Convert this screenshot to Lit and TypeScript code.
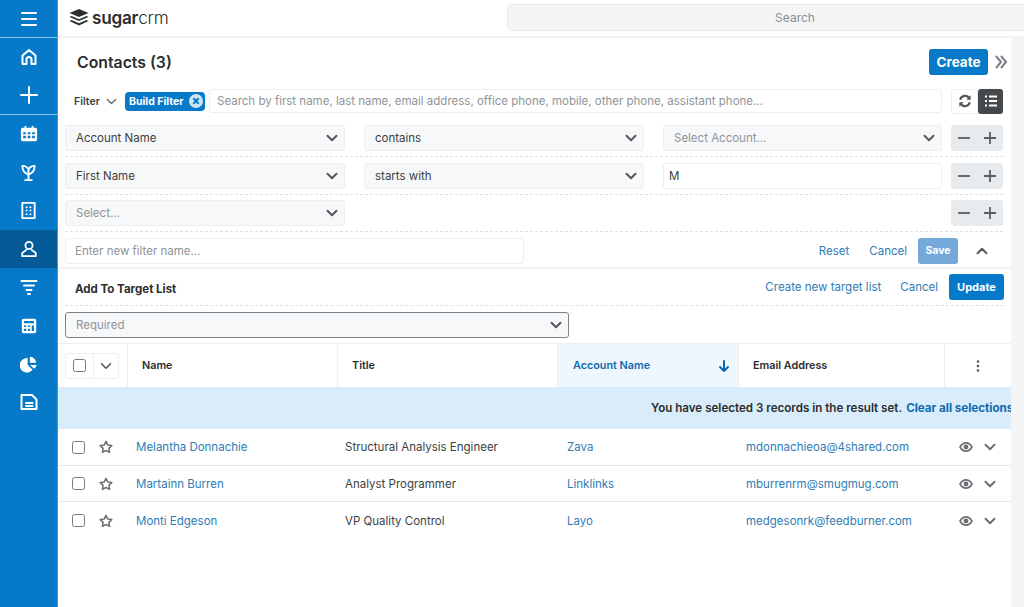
import { LitElement, html, css, svg } from "lit";
import { customElement } from "lit/decorators.js";

const i = (body: unknown, size = 20) =>
  html`<svg width=${size} height=${size} viewBox="0 0 20 20" fill="none" stroke="currentColor" stroke-width="2" stroke-linecap="round" stroke-linejoin="round">${body}</svg>`;

const chev = (size = 14, sw = 2) =>
  html`<svg width=${size} height=${size} viewBox="0 0 14 14" fill="none" stroke="currentColor" stroke-width=${sw} stroke-linecap="round" stroke-linejoin="round"><path d="M2.500 4.800 7 9.200l4.500-4.400"/></svg>`;

const navIcons: Record<string, [unknown, number]> = {
  home: [svg`<path d="M3.500 17V8.500L10 3l6.500 5.500V17h-4v-4.500a2.500 2.500 0 0 0-5 0V17z"/>`, 20],
  plus: [svg`<path d="M10 2v16M2 10h16"/>`, 20],
  cal: [svg`<path fill="currentColor" stroke="none" d="M5 1h2v2h6V1h2v2h2a2 2 0 0 1 2 2v11a2 2 0 0 1-2 2H3a2 2 0 0 1-2-2V5a2 2 0 0 1 2-2h2zM3.500 8v2.200h3V8zm5 0v2.200h3V8zm5 0v2.200h3V8zm-10 4v2.600h3V12zm5 0v2.600h3V12zm5 0v2.600h3V12z"/>`, 18],
  sprout: [svg`<path d="M10 18v-6M6.500 18h7M10 12C6 11 3.500 8 3.500 3c3.500 0 6.500 2 6.500 5v4zM10 8c0-2.500 2.500-5 6.500-5 0 5-2.500 8-6.500 9"/>`, 19],
  building: [svg`<path d="M3.500 2h13v16h-13z"/><path stroke-width="2.200" d="M8 6.500h0M12 6.500h0M8 10h0M12 10h0M8 14h0M12 14h0"/>`, 19],
  person: [svg`<circle cx="10" cy="6" r="4"/><path d="M7 11 2.500 14.500V18h15v-3.500L13 11"/>`, 18],
  funnel: [svg`<path d="M2.500 4h15M5 8.500h10M7.500 13h5M9 17h2"/>`, 20],
  calc: [svg`<path fill="currentColor" stroke="none" d="M4 2h12a2 2 0 0 1 2 2v12a2 2 0 0 1-2 2H4a2 2 0 0 1-2-2V4a2 2 0 0 1 2-2zm.500 2.500V7h11V4.500zm0 5V11h2.500V9.500zm4.300 0V11h2.400V9.500zm4.200 0V15.500h2.500V9.500zm-8.500 3.500v2.500h2.500V13zm4.300 0v2.500h2.400V13z"/>`, 18],
  pie: [svg`<path fill="currentColor" stroke="none" d="M8.500 3.500V11l5.500 5.300A8 8 0 1 1 8.500 3.500zM11 2a8 8 0 0 1 7 6.500h-7zM11 11h7.500a8 8 0 0 1-2.600 4.300z"/>`, 18],
  doc: [svg`<path d="M2.500 3h10.500l4.500 4.500V17h-15z"/><path d="M7 11h6.500M7 14h6.500"/>`, 20],
};

const rows = [
  ["Melantha Donnachie", "Structural Analysis Engineer", "Zava", "mdonnachieoa@4shared.com"],
  ["Martainn Burren", "Analyst Programmer", "Linklinks", "mburrenrm@smugmug.com"],
  ["Monti Edgeson", "VP Quality Control", "Layo", "medgesonrk@feedburner.com"],
];

@customElement("app-root")
export class AppRoot extends LitElement {
  static styles = css`
    :host { display: flex; width: 1024px; height: 607px; overflow: hidden; background: #f3f5f7; font-family: Inter, "Liberation Sans", sans-serif; font-size: 11.500px; color: #2b2d2e; }
    * { box-sizing: border-box; }
    .side { width: 58px; flex: none; background: #0679c8; color: #fff; border-right: 1px solid #3d9ae0; display: flex; flex-direction: column; }
    .side .top { height: 38px; flex: none; border-bottom: 1px solid #8cc3ea; display: flex; align-items: center; justify-content: center; }
    .group { height: 77px; flex: none; border-bottom: 1px solid #8cc3ea; }
    .group.last { height: auto; border: 0; }
    .nav { height: 38.300px; display: flex; align-items: center; justify-content: center; }
    .nav.on { background: #055a98; }
    .content { flex: 1; min-width: 0; display: flex; flex-direction: column; }
    .bar { height: 38px; flex: none; background: #fff; border-bottom: 2px solid #f1f3f5; display: flex; align-items: center; padding-left: 11px; }
    .logo { display: flex; align-items: center; gap: 3px; width: 438px; flex: none; font-size: 17.200px; letter-spacing: -.25px; color: #2b2d2e; padding-bottom: 2px; }
    .logo b { font-weight: 600; }
    .logo span { font-weight: 300; }
    .search { width: 576px; flex: none; height: 27px; margin-top: -2px; background: #f3f5f6; border: 1px solid #e8ebed; border-radius: 6px; display: flex; align-items: center; justify-content: center; color: #8a8f94; font-size: 12px; }
    .main { width: 953px; flex: 1; background: #fff; overflow: hidden; }
    .head { height: 50px; display: flex; align-items: center; padding: 0 0 2px 19px; }
    .head h1 { font-size: 15.800px; font-weight: 600; margin: 0; flex: 1; color: #2b2d2e; }
    .btn { background: #0679c8; color: #fff; font-weight: 700; border-radius: 3px; display: flex; align-items: center; justify-content: center; flex: none; }
    .create { width: 59px; height: 26px; font-size: 13.500px; }
    .more { width: 23px; padding-right: 3px; color: #7b8086; display: flex; justify-content: flex-end; }
    .filter { display: flex; align-items: center; height: 26px; padding-left: 16px; margin-bottom: 11px; }
    .filter .lbl { font-size: 10.500px; font-weight: 600; color: #3c3f42; width: 31px; }
    .filter .c { width: 20px; color: #6c7075; display: flex; }
    .pill { width: 80px; height: 19px; background: #0679c8; color: #fff; font-size: 10.500px; font-weight: 700; border-radius: 4px; display: flex; align-items: center; justify-content: space-between; padding: 0 1px 0 4px; margin-right: 4px; }
    .pill svg { color: #cfe6f7; }
    .field { border: 1px solid #eceef0; border-radius: 3px; height: 26px; background: #f6f8f9; display: flex; align-items: center; justify-content: space-between; padding: 0 5px 0 10px; font-size: 11.500px; color: #3c3f42; min-width: 0; }
    .field svg { color: #54585c; }
    .field.ph { color: #8f9499; }
    .field.w { background: #fff; }
    .field.val { padding-left: 5px; justify-content: flex-start; }
    .qs { width: 733px; height: 24px; padding-left: 7px; font-size: 11.500px; white-space: nowrap; overflow: hidden; justify-content: flex-start; }
    .icons { display: flex; margin-left: 9px; }
    .ib { width: 27px; height: 25px; border: 1px solid #eceef0; border-radius: 3px 0 0 3px; display: flex; align-items: center; justify-content: center; color: #54585c; }
    .ib.dark { width: 25px; background: #46494c; color: #fff; border: 0; border-radius: 3px; }
    .frow { display: grid; grid-template-columns: 280px 280px 279px 42px; column-gap: 19px; margin: 0 8px 5.500px 7px; height: 32px; border-bottom: 1px dashed #dfe2e5; align-items: start; }
    .frow.end { margin-bottom: 0; }
    .pm { grid-column: 4; margin-left: -10px; width: 52px; height: 26px; background: #e8ebed; border-radius: 3px; display: flex; align-items: center; justify-content: space-around; color: #5a5e62; }
    .name { display: flex; align-items: flex-start; height: 36.500px; padding: 5.500px 5px 0 7px; border-bottom: 2px solid #f1f3f5; }
    .name .field { width: 459px; padding-left: 9px; justify-content: flex-start; }
    .links { margin-left: auto; display: flex; align-items: center; color: #2f7cb5; }
    .gap20 { margin-left: 20px; }
    .save { width: 40px; height: 26px; background: #74a9da; font-size: 10.500px; margin-left: 11px; }
    .up { color: #54585c; width: 48px; height: 26px; display: flex; align-items: center; justify-content: center; }
    .tgt { display: flex; align-items: center; height: 37.500px; margin: 0 7px; padding-left: 10px; border-bottom: 1px dashed #dfe2e5; }
    .tgt b { font-size: 11.500px; font-weight: 700; padding-top: 4px; }
    .tgt .gap19 { margin-left: 19px; }
    .update { width: 55px; height: 26px; font-size: 11px; margin-left: 11px; }
    .req { padding: 6px 0 0 7px; height: 38px; border-bottom: 1px solid #eceef0; }
    .req .field { width: 504px; border: 1px solid #7d8287; }
    .grid { display: grid; grid-template-columns: 69px 210px 220px 181px 206px 67px; }
    .th { height: 43px; display: flex; align-items: center; padding-left: 14px; font-size: 10.800px; font-weight: 600; border-left: 1px solid #eceef0; }
    .th:first-child { border: 0; padding-left: 7px; }
    .th.sort { background: #eef7fe; color: #0e6aae; justify-content: space-between; padding: 0 7px 0 15px; }
    .th.dots { justify-content: center; padding: 0; color: #54585c; }
    .sel { width: 54px; height: 26px; border: 1px solid #eceef0; border-radius: 3px; display: flex; align-items: center; }
    .sel > span { width: 28px; height: 100%; display: flex; align-items: center; justify-content: center; border-right: 1px solid #eceef0; }
    .sel > i { flex: 1; display: flex; justify-content: center; color: #54585c; }
    .cb { display: block; width: 13px; height: 13px; border: 1px solid #777b7f; border-radius: 2.500px; background: #fff; }
    .banner { height: 42px; background: #d8ecfb; display: flex; align-items: center; padding-left: 593px; white-space: nowrap; overflow: hidden; font-size: 11.600px; font-weight: 600; color: #2b2d2e; }
    .banner a { color: #0e6aae; font-weight: 700; margin-left: 4px; }
    .row { border-bottom: 1px solid #e6e8ea; height: 36.600px; }
    .row:last-child { border: 0; }
    .grid.body { align-items: center; height: 100%; padding-top: 1px; font-size: 11.500px; }
    .lead { display: flex; align-items: center; padding-left: 14px; gap: 14px; color: #6c7075; }
    .cell { white-space: nowrap; }
    .cell.l, .cell.a { color: #2f7cb5; }
    .cell.n { padding-left: 9px; }
    .cell.t { padding-left: 8px; color: #3c3f42; }
    .cell.a { padding-left: 10px; }
    .cell.e { padding-left: 8px; }
    .act { display: flex; align-items: center; gap: 10px; padding-left: 15px; color: #6c7075; }
  `;

  render() {
    const nav = (k: string, on = false) =>
      html`<div class="nav ${on ? "on" : ""}">${i(navIcons[k][0], navIcons[k][1])}</div>`;
    const pm = html`<div class="pm">
      <svg width="16" height="16" viewBox="0 0 16 16" stroke="currentColor" stroke-width="1.800"><path d="M2 8h12"/></svg>
      <svg width="16" height="16" viewBox="0 0 16 16" stroke="currentColor" stroke-width="1.800"><path d="M2 8h12M8 2v12"/></svg>
    </div>`;
    const sel = (t: string, ph = false) =>
      html`<div class="field ${ph ? "ph" : ""}"><span>${t}</span>${chev()}</div>`;
    const star = html`<svg width="14" height="14" viewBox="0 0 20 20" fill="none" stroke="currentColor" stroke-width="2.200" stroke-linejoin="round"><path d="m10 2 2.500 5.200 5.700.8-4.100 4 1 5.700L10 15l-5.100 2.700 1-5.700-4.100-4 5.700-.8z"/></svg>`;
    const eye = html`<svg width="14" height="14" viewBox="0 0 20 20" fill="none" stroke="currentColor" stroke-width="2.400"><path d="M1.500 10C4 5.500 7 4 10 4s6 1.500 8.500 6C16 14.500 13 16 10 16s-6-1.500-8.500-6z"/><circle cx="10" cy="10" r="2.300" fill="currentColor"/></svg>`;
    return html`
      <aside class="side">
        <div class="top">${i(svg`<path d="M3 4h14M3 10h14M3 16h14"/>`)}</div>
        <div class="group">${nav("home")}${nav("plus")}</div>
        <div class="group last">
          ${nav("cal")}${nav("sprout")}${nav("building")}${nav("person", true)}${nav("funnel")}${nav("calc")}${nav("pie")}${nav("doc")}
        </div>
      </aside>
      <div class="content">
        <header class="bar">
          <div class="logo">
            <svg width="20" height="19" viewBox="0 0 20 19" fill="#2b2d2e"><path d="M10 1 19.500 5 10 9 .5 5z"/><path d="M2.500 8 10 11.200 17.500 8l2 1L10 13 .5 9z"/><path d="M2.500 12 10 15.200 17.500 12l2 1L10 17.500.5 13z"/></svg>
            <div><b>sugar</b><span>crm</span></div>
          </div>
          <div class="search">Search</div>
        </header>
        <main class="main">
          <div class="head">
            <h1>Contacts (3)</h1>
            <div class="btn create">Create</div>
            <div class="more"><svg width="14" height="16" viewBox="0 0 14 16" fill="none" stroke="currentColor" stroke-width="2"><path d="m2 2 5 6-5 6M7 2l5 6-5 6"/></svg></div>
          </div>
          <div class="filter">
            <span class="lbl">Filter</span>
            <span class="c">${chev(13, 1.600)}</span>
            <div class="pill">Build Filter
              <svg width="16" height="16" viewBox="0 0 16 16"><circle cx="8" cy="8" r="7" fill="currentColor"/><path d="m5.300 5.300 5.400 5.400m0-5.400-5.400 5.400" stroke="#0679c8" stroke-width="2"/></svg>
            </div>
            <div class="field w ph qs">Search by first name, last name, email address, office phone, mobile, other phone, assistant phone...</div>
            <div class="icons">
              <div class="ib"><svg width="14" height="14" viewBox="0 0 16 16" fill="none" stroke="currentColor" stroke-width="2.400"><path d="M2.500 6.500A5.700 5.700 0 0 1 13 5M13.500 9.500A5.700 5.700 0 0 1 3 11"/><path fill="currentColor" stroke="none" d="M14.500 1.500v5h-5zM1.500 14.500v-5h5z"/></svg></div>
              <div class="ib dark"><svg width="14" height="14" viewBox="0 0 14 14" stroke="currentColor" stroke-width="2"><path d="M1 2.500h2M5 2.500h8M1 7h2M5 7h8M1 11.500h2M5 11.500h8"/></svg></div>
            </div>
          </div>
          <div class="frow">${sel("Account Name")}${sel("contains")}${sel("Select Account...", true)}${pm}</div>
          <div class="frow">${sel("First Name")}${sel("starts with")}<div class="field w val">M</div>${pm}</div>
          <div class="frow end">${sel("Select...", true)}${pm}</div>
          <div class="name">
            <div class="field w ph">Enter new filter name...</div>
            <div class="links">
              <span>Reset</span><span class="gap20">Cancel</span>
              <div class="btn save">Save</div>
              <div class="up"><svg width="14" height="14" viewBox="0 0 14 14" fill="none" stroke="currentColor" stroke-width="2" stroke-linecap="round" stroke-linejoin="round"><path d="M2.500 9.200 7 4.800l4.500 4.400"/></svg></div>
            </div>
          </div>
          <div class="tgt">
            <b>Add To Target List</b>
            <div class="links"><span>Create new target list</span><span class="gap19">Cancel</span><div class="btn update">Update</div></div>
          </div>
          <div class="req"><div class="field ph"><span>Required</span>${chev()}</div></div>
          <div class="grid">
            <div class="th"><div class="sel"><span><b class="cb"></b></span><i>${chev(14, 1.600)}</i></div></div>
            <div class="th">Name</div>
            <div class="th">Title</div>
            <div class="th sort">Account Name
              <svg width="14" height="14" viewBox="0 0 14 14" fill="none" stroke="currentColor" stroke-width="2" stroke-linecap="round" stroke-linejoin="round"><path d="M7 2v10M3 8l4 4 4-4"/></svg>
            </div>
            <div class="th">Email Address</div>
            <div class="th dots"><svg width="4" height="14" viewBox="0 0 4 14" fill="currentColor"><circle cx="2" cy="2.500" r="1.300"/><circle cx="2" cy="7" r="1.300"/><circle cx="2" cy="11.500" r="1.300"/></svg></div>
          </div>
          <div class="banner">You have selected 3 records in the result set. <a>Clear all selections</a></div>
          ${rows.map(
            (r) => html`<div class="row"><div class="grid body">
              <div class="lead"><b class="cb"></b>${star}</div>
              <div class="cell l n">${r[0]}</div>
              <div class="cell t">${r[1]}</div>
              <div class="cell a">${r[2]}</div>
              <div class="cell l e">${r[3]}</div>
              <div class="act">${eye}${chev()}</div>
            </div></div>`
          )}
        </main>
      </div>
    `;
  }
}
